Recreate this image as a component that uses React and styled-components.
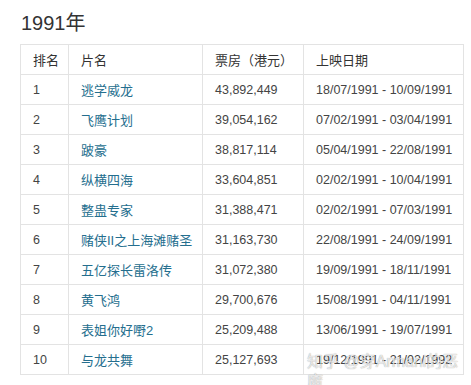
import React from "react"
import styled, { createGlobalStyle } from "styled-components"

const GlobalStyle = createGlobalStyle`
  html, body {
    margin: 0;
    padding: 0;
    background: #fff;
  }
  body {
    font-family: "Liberation Sans", Arial, "Noto Sans CJK SC", sans-serif;
  }
`

const Page = styled.div`
  position: relative;
  width: 471px;
  height: 385px;
  padding: 11px 8px 0 20px;
  box-sizing: border-box;
  overflow: hidden;
`

const Title = styled.h2`
  margin: 0 0 9px 1px;
  font-size: 20px;
  font-weight: 400;
  line-height: 24px;
  color: #333;
`

const Table = styled.table`
  width: 443px;
  border-collapse: collapse;
  table-layout: fixed;
  font-size: 12.5px;
  color: #444;
`

const Cell = styled.td`
  height: 29px;
  padding: 0 0 0 12px;
  border: 1px solid #e3e3e3;
  white-space: nowrap;
  vertical-align: middle;
`

const HeadCell = styled(Cell).attrs({ as: "th" })`
  font-weight: 400;
  text-align: left;
  color: #333;
  font-size: 13px;
`

const Link = styled.a`
  color: #246e8e;
  text-decoration: none;
  font-size: 13px;
`

const Watermark = styled.div`
  position: absolute;
  left: 307px;
  top: 352px;
  font-size: 16px;
  line-height: 20px;
  color: rgba(255, 255, 255, 0.75);
  text-shadow: 0 0 1px rgba(0, 0, 0, 0.45);
  font-family: "Liberation Sans", "Noto Sans CJK SC", sans-serif;
  pointer-events: none;
`

const movies = [
  [1, "逃学威龙", "43,892,449", "18/07/1991 - 10/09/1991"],
  [2, "飞鹰计划", "39,054,162", "07/02/1991 - 03/04/1991"],
  [3, "跛豪", "38,817,114", "05/04/1991 - 22/08/1991"],
  [4, "纵横四海", "33,604,851", "02/02/1991 - 10/04/1991"],
  [5, "整蛊专家", "31,388,471", "02/02/1991 - 07/03/1991"],
  [6, "赌侠II之上海滩赌圣", "31,163,730", "22/08/1991 - 24/09/1991"],
  [7, "五亿探长雷洛传", "31,072,380", "19/09/1991 - 18/11/1991"],
  [8, "黄飞鸿", "29,700,676", "15/08/1991 - 04/11/1991"],
  [9, "表姐你好嘢2", "25,209,488", "13/06/1991 - 19/07/1991"],
  [10, "与龙共舞", "25,127,693", "19/12/1991 - 21/02/1992"],
]

export default function App() {
  return (
    <>
      <GlobalStyle />
      <Page>
        <Title>1991年</Title>
        <Table>
          <colgroup>
            <col style={{ width: 48 }} />
            <col style={{ width: 134 }} />
            <col style={{ width: 101 }} />
            <col style={{ width: 160 }} />
          </colgroup>
          <thead>
            <tr>
              <HeadCell>排名</HeadCell>
              <HeadCell>片名</HeadCell>
              <HeadCell>票房（港元）</HeadCell>
              <HeadCell>上映日期</HeadCell>
            </tr>
          </thead>
          <tbody>
            {movies.map(([rank, name, gross, dates]) => (
              <tr key={rank}>
                <Cell>{rank}</Cell>
                <Cell>
                  <Link href="#">{name}</Link>
                </Cell>
                <Cell>{gross}</Cell>
                <Cell>{dates}</Cell>
              </tr>
            ))}
          </tbody>
        </Table>
        <Watermark>知乎 @穿Armani的恶魔</Watermark>
      </Page>
    </>
  )
}
